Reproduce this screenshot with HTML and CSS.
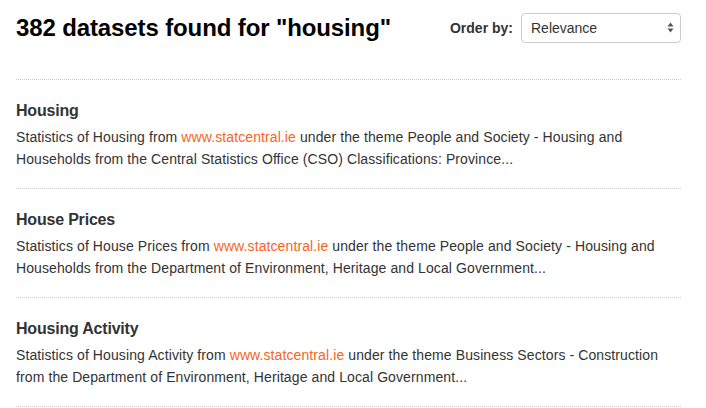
FILE: index.html
```html
<!DOCTYPE html>
<html lang="en">
<head>
<meta charset="utf-8">
<title>Search results</title>
<link rel="stylesheet" href="styles.css">
</head>
<body>
<div class="page">
  <div class="results-header">
    <h2 class="results-title">382 datasets found for "housing"</h2>
    <form class="order-form">
      <label class="order-label" for="sort">Order by:</label>
      <div class="select-wrap">
        <select id="sort" class="order-select">
          <option>Relevance</option>
          <option>Name Ascending</option>
          <option>Name Descending</option>
          <option>Last Modified</option>
        </select>
        <svg class="select-arrows" width="7" height="11" viewBox="0 0 7 11"><path d="M3.5 0.5 L6.5 4.5 L0.5 4.5 Z" fill="#555"/><path d="M3.5 10.5 L6.5 6.5 L0.5 6.5 Z" fill="#555"/></svg>
      </div>
    </form>
  </div>
  <ul class="dataset-list">
    <li class="dataset-item">
      <h3 class="dataset-heading">Housing</h3>
      <p class="dataset-desc">Statistics of Housing from <a href="#">www.statcentral.ie</a> under the theme People and Society - Housing and Households from the Central Statistics Office (CSO) Classifications: Province...</p>
    </li>
    <li class="dataset-item">
      <h3 class="dataset-heading">House Prices</h3>
      <p class="dataset-desc">Statistics of House Prices from <a href="#">www.statcentral.ie</a> under the theme People and Society - Housing and Households from the Department of Environment, Heritage and Local Government...</p>
    </li>
    <li class="dataset-item">
      <h3 class="dataset-heading">Housing Activity</h3>
      <p class="dataset-desc">Statistics of Housing Activity from <a href="#">www.statcentral.ie</a> under the theme Business Sectors - Construction from the Department of Environment, Heritage and Local Government...</p>
    </li>
  </ul>
</div>
</body>
</html>
```
FILE: styles.css
```css
* { box-sizing: border-box; }
html, body { margin: 0; padding: 0; background: #fff; }
body {
  font-family: "Liberation Sans", Arial, Helvetica, sans-serif;
  color: #333;
}
.page {
  width: 665px;
  margin-left: 16px;
}
.results-header {
  display: flex;
  justify-content: space-between;
  align-items: center;
  padding-top: 13px;
  padding-bottom: 36px;
  border-bottom: 1px dotted #ccc;
}
.results-title {
  margin: 0;
  font-size: 24px;
  line-height: 30px;
  font-weight: bold;
  letter-spacing: -0.12px;
  color: #000;
}
.order-form {
  display: flex;
  align-items: center;
  gap: 8px;
  margin: 0;
}
.order-label {
  font-size: 14px;
  font-weight: bold;
  color: #333;
}
.select-wrap {
  position: relative;
}
.order-select {
  -webkit-appearance: none;
  appearance: none;
  width: 160px;
  height: 30px;
  padding: 0 9px;
  border: 1px solid #ccc;
  border-radius: 4px;
  background: #fff;
  font-family: inherit;
  font-size: 14px;
  color: #333;
  display: block;
}
.select-arrows {
  position: absolute;
  right: 7px;
  top: 9px;
  pointer-events: none;
}
.dataset-list {
  list-style: none;
  margin: 0;
  padding: 0;
}
.dataset-item {
  padding: 21px 0 18px;
  border-bottom: 1px dotted #ccc;
}
.dataset-heading {
  margin: 0 0 5px;
  font-size: 16px;
  line-height: 20px;
  font-weight: bold;
  letter-spacing: -0.2px;
  color: #333;
}
.dataset-desc {
  margin: 0;
  font-size: 14px;
  line-height: 22px;
  letter-spacing: 0.1px;
  color: #333;
}
.dataset-desc a {
  color: #f8641e;
  text-decoration: none;
}
```
